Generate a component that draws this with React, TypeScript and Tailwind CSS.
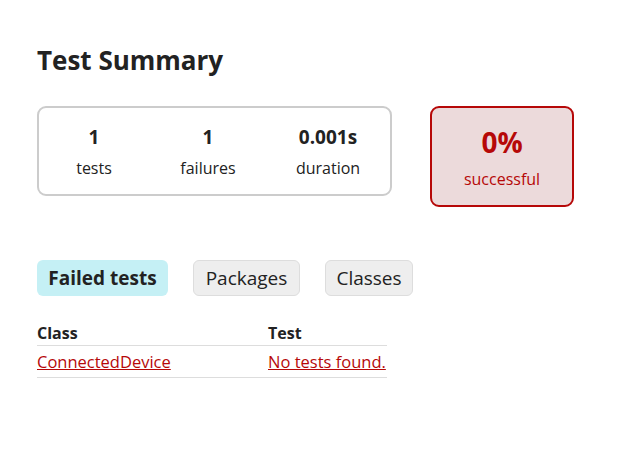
export default function App() {
  return (
    <div className="min-h-screen bg-white px-[37px] pt-[40px] text-[16px] text-[#222] [font-family:'Open_Sans','Noto_Sans',sans-serif]">
      <h1 className="text-[26px] font-bold leading-[40px]">Test Summary</h1>

      <div className="mt-[26px] flex items-start gap-[38px]">
        {/* counters box */}
        <div className="flex h-[90px] w-[355px] items-center rounded-[9px] border-2 border-[#cccccc] pl-[1px]">
          <div className="flex w-[108px] flex-col items-center">
            <div className="text-[19px] font-bold leading-[26px]">1</div>
            <div className="mt-[7px] text-[16px] leading-[22px]">tests</div>
          </div>
          <div className="ml-[6px] flex w-[108px] flex-col items-center">
            <div className="text-[19px] font-bold leading-[26px]">1</div>
            <div className="mt-[7px] text-[16px] leading-[22px]">failures</div>
          </div>
          <div className="ml-[12px] flex w-[108px] flex-col items-center">
            <div className="text-[19px] font-bold leading-[26px]">0.001s</div>
            <div className="mt-[7px] text-[16px] leading-[22px]">duration</div>
          </div>
        </div>

        {/* success rate */}
        <div className="flex h-[101px] w-[144px] flex-col items-center justify-center rounded-[9px] border-2 border-[#b60808] bg-[#ecdadb] text-[#b60808]">
          <div className="text-[28px] font-bold leading-[36px]">0%</div>
          <div className="mt-[8px] text-[16px] leading-[22px]">successful</div>
        </div>
      </div>

      <div className="mt-[53px] flex gap-[25px]">
        <div className="flex h-[36px] w-[131px] items-center justify-center rounded-[6px] bg-[#c5f0f5] text-[19px] font-bold">
          Failed tests
        </div>
        <div className="flex h-[36px] w-[107px] items-center justify-center rounded-[6px] border border-[#dddddd] bg-[#eeeeee] text-[19px]">
          Packages
        </div>
        <div className="flex h-[36px] w-[88px] items-center justify-center rounded-[6px] border border-[#dddddd] bg-[#eeeeee] text-[19px]">
          Classes
        </div>
      </div>

      <table className="mt-[26px] w-[350px] border-collapse text-left text-[16px]">
        <thead>
          <tr className="border-b border-[#dddddd]">
            <th className="w-[231px] p-0 pb-[1px] font-bold leading-[22px]">Class</th>
            <th className="p-0 pb-[1px] font-bold leading-[22px]">Test</th>
          </tr>
        </thead>
        <tbody>
          <tr className="border-b border-[#dddddd]">
            <td className="p-0 py-[5px] text-[16.5px] leading-[21px]">
              <a href="#" className="text-[#b60808] underline">ConnectedDevice</a>
            </td>
            <td className="p-0 py-[5px] text-[16.5px] leading-[21px]">
              <a href="#" className="text-[#b60808] underline">No tests found.</a>
            </td>
          </tr>
        </tbody>
      </table>
    </div>
  );
}
